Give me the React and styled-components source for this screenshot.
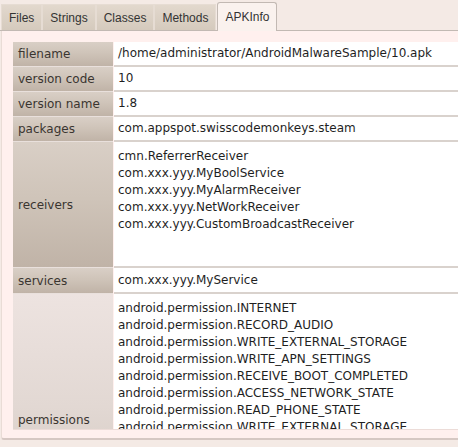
import React from 'react';
import styled, { createGlobalStyle } from 'styled-components';

const Global = createGlobalStyle`
  html, body {
    margin: 0;
    padding: 0;
    background: #f4eae5;
  }
`;

const Window = styled.div`
  width: 458px;
  height: 447px;
  overflow: hidden;
  background: #f4eae5;
  font-family: "DejaVu Sans", Verdana, sans-serif;
  font-size: 12px;
  color: #222;
`;

const TabBar = styled.div`
  display: flex;
  align-items: flex-end;
  height: 31px;
  padding-left: 1px;
  border-bottom: 1px solid #c2b9b3;
  box-sizing: border-box;
`;

const Tab = styled.div`
  height: ${p => (p.active ? '29px' : '26px')};
  padding: 0 7px;
  display: flex;
  align-items: center;
  box-sizing: border-box;
  color: #333;
  font-family: "Liberation Sans", Arial, sans-serif;
  font-size: 12px;
  border: 1px solid ${p => (p.active ? '#c2b9b3' : '#e6dcd3')};
  border-bottom: none;
  border-radius: ${p => (p.active ? '3px 3px 0 0' : '0')};
  background: ${p =>
    p.active ? '#faf2ee' : 'linear-gradient(#e2d8cd, #d5cabd)'};
  margin-bottom: ${p => (p.active ? '-1px' : '0')};
  margin-left: ${p => (p.active ? '1px' : '0')};
`;

const Panel = styled.div`
  height: 409px;
  margin-left: 1px;
  padding: 11px 0 0 11px;
  background: #fff0ee;
  border-left: 1px solid #e9dcd6;
  border-bottom: 2px solid #d6c8c3;
  border-radius: 0 0 0 3px;
  box-sizing: border-box;
`;

const Viewport = styled.div`
  height: 387px;
  overflow: hidden;
  border-bottom: 1px solid #ecdcd8;
`;

const Grid = styled.div`
  display: grid;
  grid-template-columns: 100px 360px;
  column-gap: 1px;
`;

const Label = styled.div`
  height: ${p => p.h}px;
  display: flex;
  align-items: center;
  padding-left: 5px;
  box-sizing: border-box;
  color: #3a3530;
  border-bottom: 1px solid #e9e0dc;
  background: ${p =>
    p.light
      ? 'linear-gradient(#ede3e0 0%, #e2d8d3 45%, #cbc0b7 100%)'
      : 'linear-gradient(#d9cfc6 0%, #cfc4b9 45%, #c0b3a7 100%)'};
`;

const Value = styled.div`
  height: ${p => p.h}px;
  padding: ${p => (p.multi ? '6px 4px' : '0 4px')};
  display: flex;
  flex-direction: column;
  justify-content: ${p => (p.multi ? 'flex-start' : 'center')};
  box-sizing: border-box;
  background: #fff;
  border-bottom: 2px solid #d9d2cd;
  line-height: 17px;
  white-space: nowrap;
  color: #1f1f1f;
`;

const tabs = ['Files', 'Strings', 'Classes', 'Methods', 'APKInfo'];

const rows = [
  { label: 'filename', h: 25, values: ['/home/administrator/AndroidMalwareSample/10.apk'] },
  { label: 'version code', h: 25, values: ['10'] },
  { label: 'version name', h: 25, values: ['1.8'] },
  { label: 'packages', h: 25, values: ['com.appspot.swisscodemonkeys.steam'] },
  {
    label: 'receivers',
    h: 126,
    multi: true,
    values: [
      'cmn.ReferrerReceiver',
      'com.xxx.yyy.MyBoolService',
      'com.xxx.yyy.MyAlarmReceiver',
      'com.xxx.yyy.NetWorkReceiver',
      'com.xxx.yyy.CustomBroadcastReceiver',
    ],
  },
  { label: 'services', h: 26, values: ['com.xxx.yyy.MyService'] },
  {
    label: 'permissions',
    h: 252,
    multi: true,
    light: true,
    values: [
      'android.permission.INTERNET',
      'android.permission.RECORD_AUDIO',
      'android.permission.WRITE_EXTERNAL_STORAGE',
      'android.permission.WRITE_APN_SETTINGS',
      'android.permission.RECEIVE_BOOT_COMPLETED',
      'android.permission.ACCESS_NETWORK_STATE',
      'android.permission.READ_PHONE_STATE',
      'android.permission.WRITE_EXTERNAL_STORAGE',
      'android.permission.READ_CONTACTS',
      'android.permission.CALL_PHONE',
      'android.permission.SEND_SMS',
      'android.permission.RECEIVE_SMS',
      'android.permission.VIBRATE',
      'android.permission.WAKE_LOCK',
    ],
  },
];

const App = () => (
  <Window>
    <Global />
    <TabBar>
      {tabs.map(t => (
        <Tab key={t} active={t === 'APKInfo'}>
          {t}
        </Tab>
      ))}
    </TabBar>
    <Panel>
      <Viewport>
        <Grid>
          {rows.map(r => (
            <React.Fragment key={r.label}>
              <Label h={r.h} light={r.light}>
                {r.label}
              </Label>
              <Value h={r.h} multi={r.multi}>
                {r.values.map((v, i) => (
                  <div key={i}>{v}</div>
                ))}
              </Value>
            </React.Fragment>
          ))}
        </Grid>
      </Viewport>
    </Panel>
  </Window>
);

export default App;
